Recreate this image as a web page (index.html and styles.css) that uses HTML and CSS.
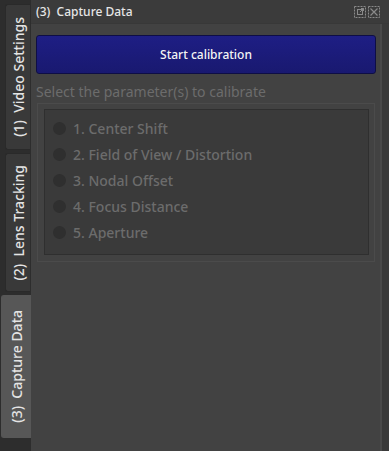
FILE: index.html
```html
<!DOCTYPE html>
<html lang="en">

<head>
    <meta charset="UTF-8">
    <meta name="viewport" content="width=device-width, initial-scale=1.0">
    <title>Capture Data</title>
    <link rel="stylesheet" href="styles.css">
</head>

<body>

    <div class="tab-bar">
        <div class="side-tab tab-video"><span>(1)&nbsp; Video Settings</span></div>
        <div class="side-tab tab-lens"><span>(2)&nbsp; Lens Tracking</span></div>
        <div class="side-tab tab-capture active"><span>(3)&nbsp; Capture Data</span></div>
    </div>

    <div class="panel">
        <div class="panel-header">
            <span class="panel-title">(3)&nbsp; Capture Data</span>
            <div class="header-icons">
                <svg width="12" height="12" viewBox="0 0 12 12">
                    <rect x="0.5" y="0.5" width="11" height="11" fill="none" stroke="#8a8a8a" stroke-dasharray="2 1"/>
                    <rect x="3.5" y="3.5" width="5" height="5" fill="none" stroke="#8a8a8a"/>
                    <path d="M6 6 L9.5 2.5 M7 2.5 H9.5 V5" fill="none" stroke="#8a8a8a"/>
                </svg>
                <svg width="12" height="12" viewBox="0 0 12 12">
                    <rect x="0.5" y="0.5" width="11" height="11" fill="none" stroke="#8a8a8a" stroke-dasharray="2 1"/>
                    <path d="M2.5 2.5 L9.5 9.5 M9.5 2.5 L2.5 9.5" fill="none" stroke="#8a8a8a" stroke-width="1.2"/>
                </svg>
            </div>
        </div>

        <div class="panel-body">
            <div class="content">
                <button class="calib-button">Start calibration</button>

                <p class="hint">Select the parameter(s) to calibrate</p>

                <div class="group-frame">
                    <div class="group-box">
                        <label class="option"><span class="radio"></span>1. Center Shift</label>
                        <label class="option"><span class="radio"></span>2. Field of View / Distortion</label>
                        <label class="option"><span class="radio"></span>3. Nodal Offset</label>
                        <label class="option"><span class="radio"></span>4. Focus Distance</label>
                        <label class="option"><span class="radio"></span>5. Aperture</label>
                    </div>
                </div>
            </div>
            <div class="right-strip"></div>
        </div>
    </div>

</body>

</html>
```

FILE: styles.css
```css
body {
    font-family: 'Noto Sans', 'Open Sans', sans-serif;
    margin: 0;
    overflow: hidden;
    background-color: #2d2d2d;
    color: #e0e0e0;
    display: flex;
    height: 451px;
}

.tab-bar {
    width: 31px;
    display: flex;
    flex-direction: column;
    gap: 3px;
    padding-top: 4px;
    box-sizing: border-box;
    flex-shrink: 0;
}

.side-tab {
    margin-left: 5px;
    width: 25px;
    box-sizing: border-box;
    background-color: #393939;
    border: 1px solid #2a2a2a;
    border-right: none;
    border-radius: 3px 0 0 3px;
    display: flex;
    align-items: center;
    justify-content: center;
}

.side-tab span {
    writing-mode: vertical-rl;
    transform: rotate(180deg);
    font-size: 14px;
    font-weight: 500;
    color: #e4e4e4;
    white-space: nowrap;
}

.tab-video {
    height: 146px;
}

.tab-lens {
    height: 139px;
}

.tab-capture {
    height: 143px;
}

.side-tab.active {
    margin-left: 1px;
    width: 30px;
    background-color: #575757;
    border-color: #575757;
}

.panel {
    flex: 1;
    display: flex;
    flex-direction: column;
    background-color: #424242;
}

.panel-header {
    height: 23px;
    background-color: #3b3b3b;
    border-bottom: 1px solid #383838;
    display: flex;
    align-items: center;
    justify-content: space-between;
    padding: 0 11px 0 5px;
}

.panel-title {
    font-size: 12px;
    font-weight: 500;
    color: #e6e6e6;
}

.header-icons {
    display: flex;
    gap: 2px;
}

.panel-body {
    flex: 1;
    display: flex;
}

.content {
    flex: 1;
    padding: 11px 4px 0 5px;
    border-right: 2px solid #4a4a4a;
}

.calib-button {
    font-family: 'Noto Sans', 'Open Sans', sans-serif;
    width: 340px;
    height: 39px;
    background: linear-gradient(#1e1e84, #191970);
    border: 1px solid #0e0e45;
    border-radius: 3px;
    color: #f4f4f4;
    font-size: 12px;
    font-weight: 500;
    display: block;
}

.hint {
    margin: 8px 0 0 0;
    font-size: 14px;
    color: #6c6c6c;
    line-height: 19px;
}

.group-frame {
    margin: 2px 1px 0 1px;
    border: 1px solid #4b4b4b;
    padding: 5px 5px 6px 6px;
}

.group-box {
    background-color: #3a3a3a;
    border: 1px solid #2f2f2f;
    padding: 5px 0 9px 8px;
    display: flex;
    flex-direction: column;
}

.option {
    height: 26px;
    display: flex;
    align-items: center;
    gap: 7px;
    font-size: 14px;
    font-weight: 500;
    color: #6c6c6c;
}

.radio {
    width: 13px;
    height: 13px;
    border-radius: 50%;
    background-color: #2f2f2f;
}

.right-strip {
    width: 9px;
    background-color: #3a3a3a;
}
```
